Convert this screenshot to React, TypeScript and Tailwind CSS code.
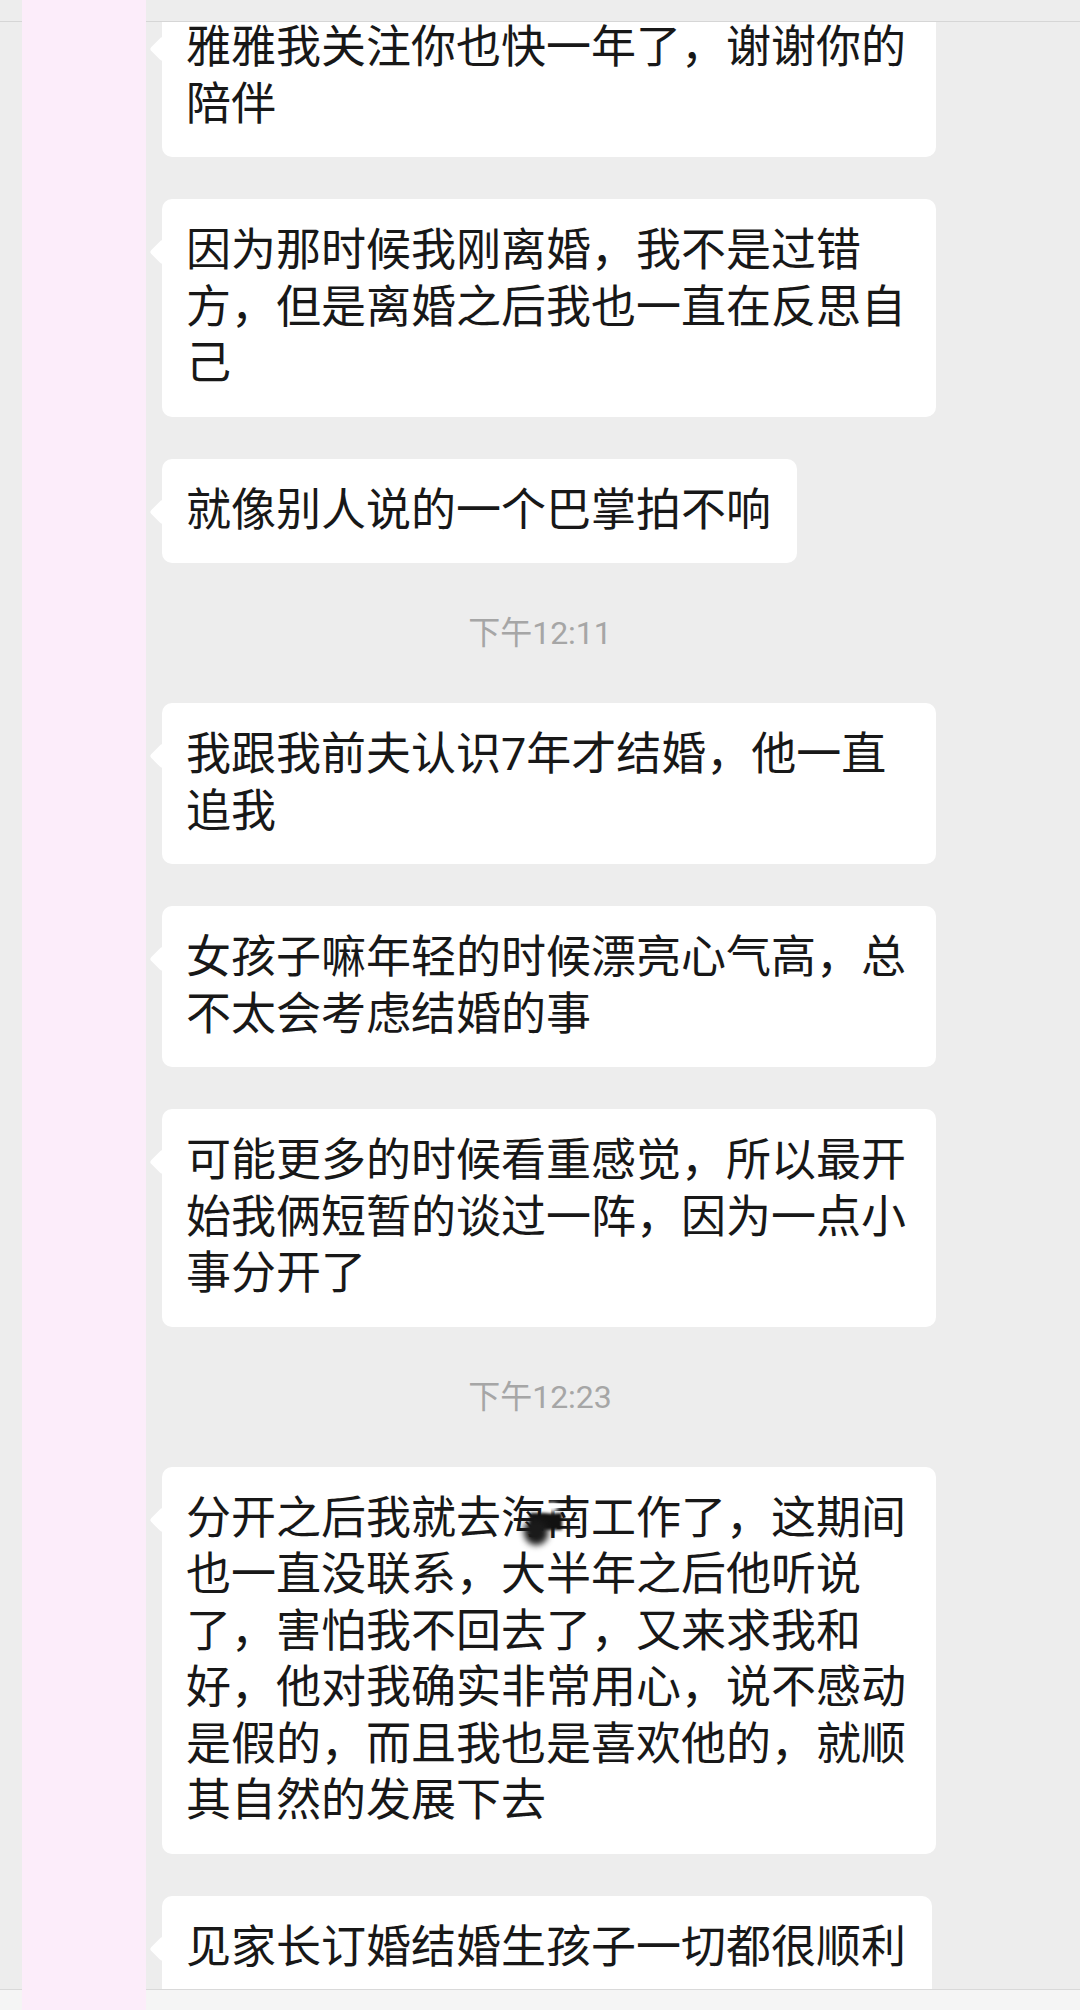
import React from 'react';

const messages: { type: 'msg' | 'time'; text: string; blot?: boolean }[] = [
  { type: 'msg', text: '雅雅我关注你也快一年了，谢谢你的陪伴' },
  { type: 'msg', text: '因为那时候我刚离婚，我不是过错方，但是离婚之后我也一直在反思自己' },
  { type: 'msg', text: '就像别人说的一个巴掌拍不响' },
  { type: 'time', text: '下午12:11' },
  { type: 'msg', text: '我跟我前夫认识7年才结婚，他一直追我' },
  { type: 'msg', text: '女孩子嘛年轻的时候漂亮心气高，总不太会考虑结婚的事' },
  { type: 'msg', text: '可能更多的时候看重感觉，所以最开始我俩短暂的谈过一阵，因为一点小事分开了' },
  { type: 'time', text: '下午12:23' },
  {
    type: 'msg',
    text: '分开之后我就去海南工作了，这期间也一直没联系，大半年之后他听说了，害怕我不回去了，又来求我和好，他对我确实非常用心，说不感动是假的，而且我也是喜欢他的，就顺其自然的发展下去',
    blot: true,
  },
  { type: 'msg', text: '见家长订婚结婚生孩子一切都很顺利' },
];

const Bubble: React.FC<{ text: string; blot?: boolean }> = ({ text, blot }) => (
  <div className="relative ml-[162px] w-fit max-w-[774px] rounded-[10px] bg-white pl-[24px] pr-[26px] py-[24px]">
    {/* tail */}
    <div className="absolute left-[-9px] top-[44px] h-[18px] w-[18px] rotate-45 rounded-[3px] bg-white" />
    <p className="relative text-[45px] leading-[56.5px] text-[#181818] font-['Roboto','Noto_Sans_CJK_SC',sans-serif]">
      {text}
    </p>
    {/* smudge over a place name */}
    {blot && (
      <>
        <div className="absolute left-[368px] top-[46px] h-[17px] w-[32px] bg-[#111] blur-[1.5px]" />
        <div className="absolute left-[362px] top-[52px] h-[26px] w-[24px] -rotate-12 rounded-full bg-[#1a1a1a] blur-[3px]" />
        <div className="absolute left-[384px] top-[36px] h-[9px] w-[12px] rounded-full bg-white blur-[2px]" />
      </>
    )}
  </div>
);

export default function App() {
  return (
    <div className="relative h-[2010px] w-[1080px] overflow-hidden bg-[#ededed]">
      <div className="mt-[-4px] flex flex-col gap-[42px]">
        {messages.map((m, i) =>
          m.type === 'time' ? (
            <div
              key={i}
              className="text-center text-[32px] leading-[56px] text-[#a6a6a6] font-['Roboto','Noto_Sans_CJK_SC',sans-serif]"
            >
              {m.text}
            </div>
          ) : (
            <Bubble key={i} text={m.text} blot={m.blot} />
          )
        )}
      </div>

      {/* top bar */}
      <div className="absolute left-0 right-0 top-0 h-[22px] border-b border-[#d6d6d6] bg-[#ededed]" />
      {/* bottom bar */}
      <div className="absolute bottom-0 left-0 right-0 h-[21px] border-t border-[#d9d9d9] bg-[#f5f5f5]" />
      {/* pink strip over avatars */}
      <div className="absolute bottom-0 left-[22px] top-0 w-[124px] bg-[#fcedfa]" />
    </div>
  );
}
